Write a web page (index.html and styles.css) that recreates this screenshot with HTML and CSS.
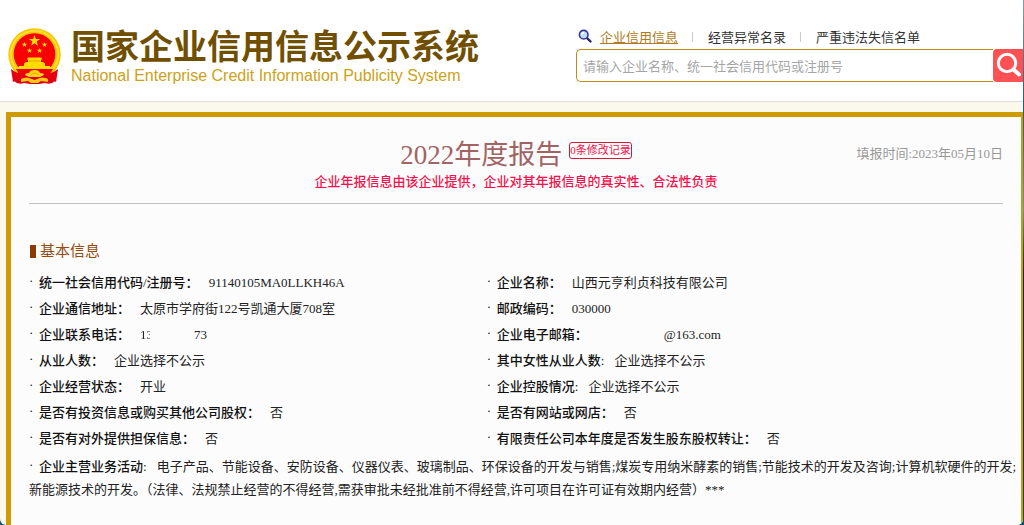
FILE: index.html
```
<!DOCTYPE html>
<html lang="zh-CN">
<head>
<meta charset="UTF-8" />
<meta name="viewport" content="width=device-width, initial-scale=1" />
<title>国家企业信用信息公示系统</title>
<link rel="stylesheet" href="styles.css">
</head>
<body>
<div class="page">

<header class="header">
  <div class="brand">
    <svg class="emblem" viewBox="0 0 53 57" aria-hidden="true">
      <path d="M8 38 L6 53 Q10 57 16 55 L22 56 H31 L37 55 Q43 57 47 53 L45 38Z" fill="#dc0012"/>
      <path d="M8 45A26.200 26.200 0 1 1 45 45Z" fill="#f5c800"/>
      <path d="M8 41A23.600 23.600 0 1 1 45 41" fill="none" stroke="#ffde30" stroke-width="2"/>
      <circle cx="26.500" cy="26" r="20.800" fill="#fa0000"/>
      <g fill="#ffdc00">
        <path d="M26.500 7l1.400 4h4.200l-3.400 2.600 1.200 4.100-3.400-2.500-3.400 2.500 1.200-4.100-3.400-2.600h4.200z"/>
        <path id="star" d="M16.500 14l.7 1.800h2l-1.600 1.200.6 2-1.700-1.200-1.700 1.200.6-2-1.600-1.200h2z"/>
        <use href="#star" x="20"/>
        <use href="#star" x="5" y="6"/>
        <use href="#star" x="15" y="6"/>
        <path d="M20 29.500h13l1.500 2h-1.500v2.500h2l2 1.500v2.500h5v2h-31v-2h5v-2.500l2-1.500h2v-2.500h-1.500z"/>
      </g>
      <path d="M20.500 33h12" stroke="#f0a000" stroke-width="1"/>
      <path d="M10 39h33v2H10z" fill="#ffdc00"/>
      <path d="M8 41h37l-3 5H11z" fill="#f50000"/>
      <path d="M3 41q6 5 13 5l-5 5-6 3zM50 41q-6 5-13 5l5 5 6 3z" fill="#e60012"/>
      <path d="M17 47q0-2 4-2 1-3 5.500-3t5.500 3q4 0 4 2l-4 2H21z" fill="#ffd21a"/>
      <path d="M23 47q1-2 3.500-2t3.500 2" fill="none" stroke="#f0a000" stroke-width="1"/>
      <path d="M13 54q-1-4 3-4 3-1 5 0l5.500 2 5.500-2q2-1 5 0 4 0 3 4l-7-1-3 2h-7l-3-2z" fill="#ffc61a"/>
    </svg>
    <div class="brand-text">
      <h1>国家企业信用信息公示系统</h1>
      <p>National Enterprise Credit Information Publicity System</p>
    </div>
  </div>

  <form class="search">
    <nav class="tabs">
      <svg class="tab-icon" viewBox="0 0 14 14" aria-hidden="true">
        <path d="M8.500 8.500l4 4" stroke="#29206e" stroke-width="2.400" stroke-linecap="round"/>
        <circle cx="5.700" cy="5.700" r="4.300" fill="#b9e2fa" stroke="#3b3290" stroke-width="1.600"/>
        <path d="M3.500 6q0-2.400 2.500-2.700" fill="none" stroke="#fff" stroke-width="1.300"/>
      </svg>
      <a class="active" href="#">企业信用信息</a>
      <a href="#">经营异常名录</a>
      <a href="#">严重违法失信名单</a>
    </nav>
    <div class="search-box">
      <input type="text" aria-label="搜索企业" placeholder="请输入企业名称、统一社会信用代码或注册号">
      <button type="button" aria-label="搜索">
        <svg viewBox="0 0 30 33" aria-hidden="true">
          <circle cx="14" cy="14" r="8.700" fill="none" stroke="#fff" stroke-width="3"/>
          <path d="M20.500 20.500l5.500 5" stroke="#fff" stroke-width="4" stroke-linecap="round"/>
        </svg>
      </button>
    </div>
  </form>
</header>

<main class="report">
  <div class="report-head">
    <div class="title">
      <h2>2022年度报告</h2>
      <a class="badge" href="#">0条修改记录</a>
    </div>
    <span class="date">填报时间:2023年05月10日</span>
    <p class="notice">企业年报信息由该企业提供，企业对其年报信息的真实性、合法性负责</p>
  </div>

  <h3>基本信息</h3>

  <ul class="info">
    <li><b>统一社会信用代码/注册号：</b><span>91140105MA0LLKH46A</span></li>
    <li><b>企业名称：</b><span>山西元亨利贞科技有限公司</span></li>
    <li><b>企业通信地址：</b><span>太原市学府街122号凯通大厦708室</span></li>
    <li><b>邮政编码：</b><span>030000</span></li>
    <li><b>企业联系电话：</b><span class="phone">13</span><span class="phone-end">73</span></li>
    <li><b>企业电子邮箱：</b><span class="mail">@163.com</span></li>
    <li><b>从业人数：</b><span>企业选择不公示</span></li>
    <li><b>其中女性从业人数:</b><span>企业选择不公示</span></li>
    <li><b>企业经营状态：</b><span>开业</span></li>
    <li><b>企业控股情况:</b><span>企业选择不公示</span></li>
    <li><b>是否有投资信息或购买其他公司股权：</b><span>否</span></li>
    <li><b>是否有网站或网店：</b><span>否</span></li>
    <li><b>是否有对外提供担保信息：</b><span>否</span></li>
    <li><b>有限责任公司本年度是否发生股东股权转让：</b><span>否</span></li>
  </ul>
  <p class="business"><b>企业主营业务活动:</b><span>电子产品、节能设备、安防设备、仪器仪表、玻璃制品、环保设备的开发与销售;煤炭专用纳米酵素的销售;节能技术的开发及咨询;计算机软硬件的开发;</span><br>新能源技术的开发。（法律、法规禁止经营的不得经营,需获审批未经批准前不得经营,许可项目在许可证有效期内经营）***</p>
</main>

</div>
</body>
</html>
```
FILE: styles.css
```
* {
  box-sizing: border-box;
}
html {
  background: linear-gradient(#8a9a9c, #1d5b86 20%, #4d9fc4 40%, #111c22 52%, #14222a 85%, #0d5573);
}
body, h1, h2, h3, p, ul {
  margin: 0;
  padding: 0;
}
body {
  padding-right: 1px;
  font-family: "Liberation Serif", "Noto Sans CJK SC", serif;
  font-size: 13px;
  color: #222;
}
.page {
  display: flex;
  flex-direction: column;
  min-height: 100vh;
  background: #fbf8ec;
  border-radius: 0 0 6px 6px;
  overflow: hidden;
}

/* header */
.header {
  display: flex;
  justify-content: space-between;
  padding: 28px 0 15px 8px;
  background: #fff;
  border-bottom: 1px solid #ddd;
}
.brand {
  display: flex;
  gap: 10px;
}
.emblem {
  width: 53px;
  height: 57px;
}
.brand-text {
  white-space: nowrap;
}
.brand h1 {
  margin-bottom: 4px;
  font: bold 34px/34px "Noto Sans CJK SC", sans-serif;
  color: #705000;
}
.brand p {
  font: 16px/20px "Liberation Sans", Arial, sans-serif;
  color: #cda217;
}
.search {
  width: 447px;
}
.tabs {
  display: flex;
  align-items: center;
  height: 16px;
  margin-bottom: 5px;
  padding-left: 2px;
}
.tab-icon {
  width: 14px;
  height: 14px;
  margin-right: 8px;
}
.tabs a {
  color: #333;
  text-decoration: none;
}
.tabs a + a::before {
  content: "";
  display: inline-block;
  width: 1px;
  height: 10px;
  margin: 0 15px 0 14px;
  background: #ccc;
}
.tabs .active {
  color: #b07a20;
  text-decoration: underline;
}
.search-box {
  display: flex;
  height: 33px;
}
.search-box input {
  flex: 1;
  min-width: 0;
  padding: 0 6px;
  border: 1px solid #bd8c14;
  border-right: 0;
  border-radius: 5px 0 0 5px;
  font: 13px "Noto Sans CJK SC", sans-serif;
  outline: none;
}
.search-box input::placeholder {
  color: #a5a5a5;
}
.search-box button {
  width: 30px;
  padding: 0;
  border: none;
  border-radius: 4px 0 0 4px;
  background: #ff5053;
  cursor: pointer;
}
.search-box svg {
  display: block;
  width: 30px;
  height: 33px;
}

/* annual report */
.report {
  flex: 1;
  margin: 10px 0 0 6px;
  padding: 22px 18px 0;
  background: #fcfcfc;
  border: 5px solid #cf9b02;
  border-right-width: 2px;
  border-bottom: 0;
}
.report-head {
  display: grid;
  grid-template-columns: 1fr auto 1fr;
  padding-bottom: 10px;
  border-bottom: 1px solid #c2c2c2;
}
.title {
  grid-column: 2;
  display: flex;
  align-items: flex-start;
  gap: 7px;
}
.title h2 {
  font-size: 27px;
  line-height: 32px;
  font-weight: normal;
  color: #a16464;
}
.badge {
  margin-top: 3px;
  border: 1px solid #d31a35;
  border-radius: 3px;
  font-size: 11px;
  line-height: 15px;
  color: #f5104a;
  text-decoration: none;
}
.date {
  justify-self: end;
  line-height: 30px;
  color: #999;
}
.notice {
  grid-column: 1 / -1;
  text-align: center;
  line-height: 22px;
  font-weight: 500;
  color: #f5104a;
}
h3 {
  display: flex;
  align-items: center;
  gap: 4px;
  margin-top: 36px;
  padding-left: 1px;
  font-size: 15px;
  line-height: 22px;
  font-weight: normal;
  color: #964b0e;
}
h3::before {
  content: "";
  width: 6px;
  height: 13px;
  background: #8a3c00;
}
.info {
  display: grid;
  grid-template-columns: 47% 1fr;
  margin-top: 8px;
  list-style: none;
}
.info li {
  line-height: 26px;
  white-space: nowrap;
}
.info b, .business b {
  margin-right: 10px;
  font-weight: 500;
  color: #111;
}
.info b::before, .business b::before {
  content: "·";
  display: inline-block;
  width: 10px;
  vertical-align: 2px;
  line-height: 1;
}
.phone {
  color: transparent;
  background: linear-gradient(90deg, #222 80%, transparent 80%);
  -webkit-background-clip: text;
  background-clip: text;
}
.phone-end {
  margin-left: 41px;
}
.mail {
  margin-left: 66px;
}
.business {
  margin-top: 3px;
  line-height: 23px;
  white-space: nowrap;
}
```
